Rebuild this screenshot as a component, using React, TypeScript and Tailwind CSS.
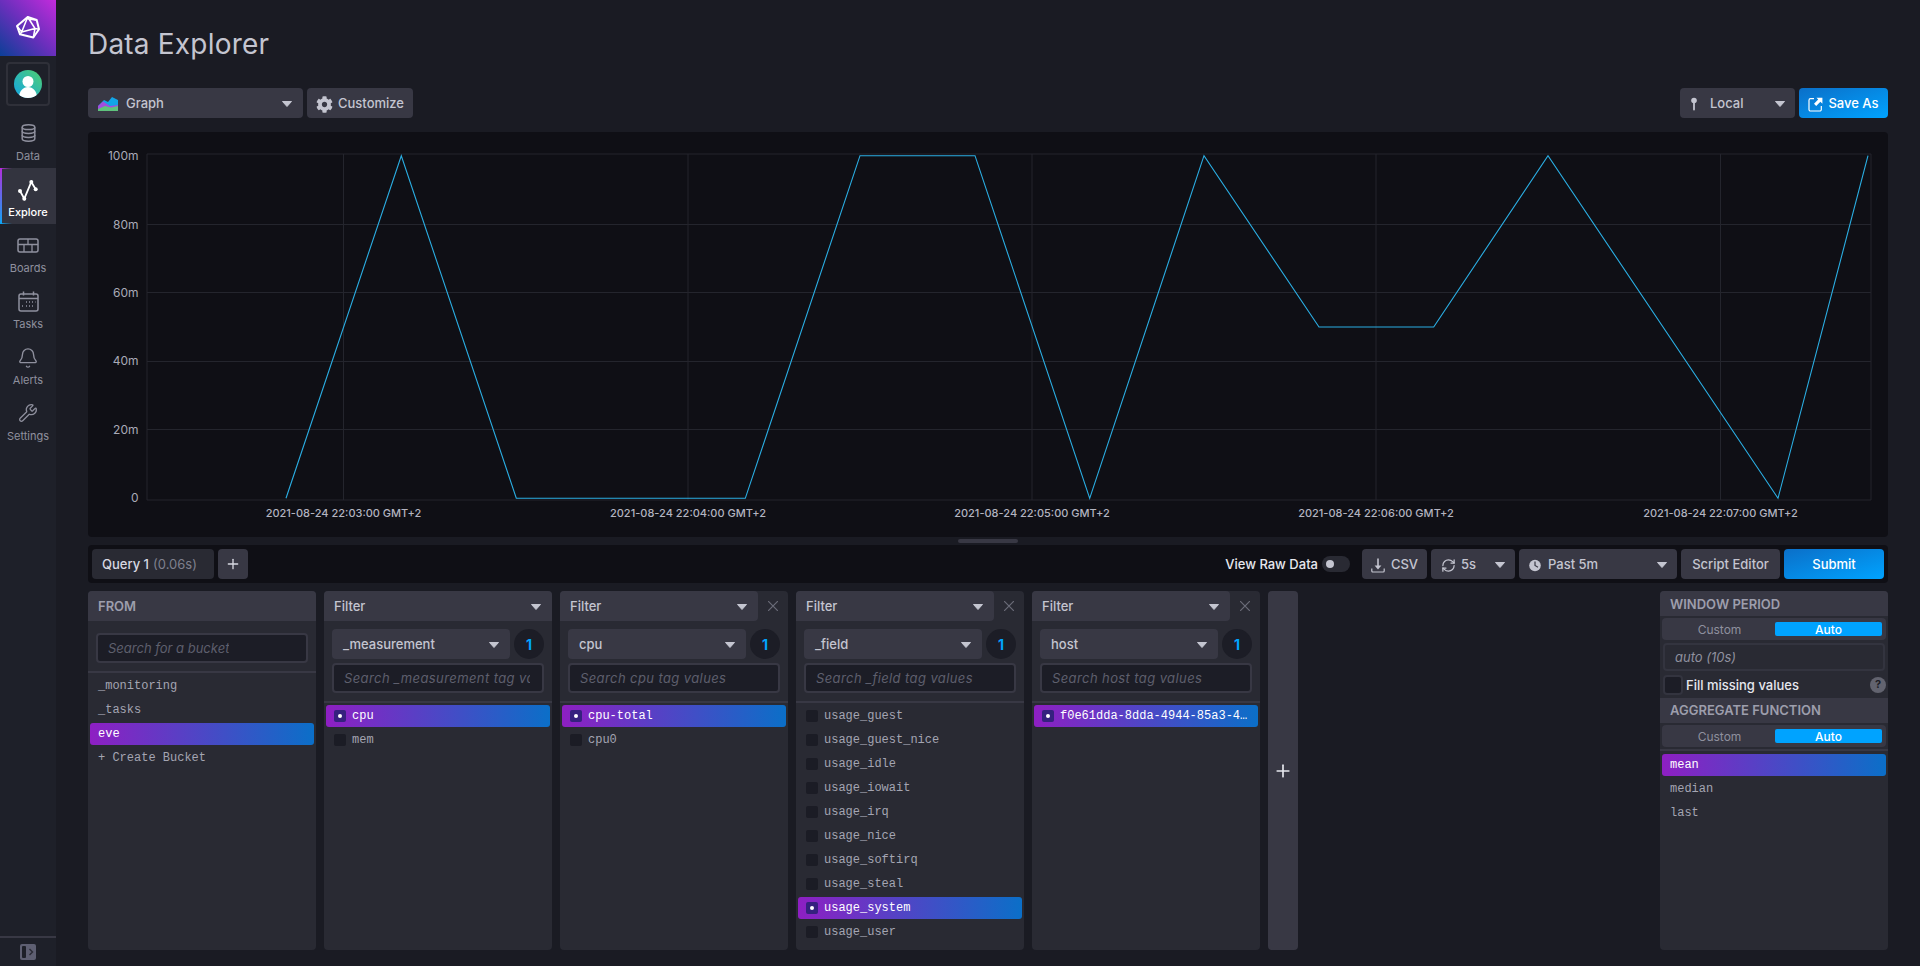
import React from "react";
import { Bell, Plus, RefreshCw, Wrench } from "lucide-react";
import { FaCog } from "react-icons/fa";

const mono = "font-[family-name:'Liberation_Mono',monospace]";

const Caret = () => (
  <svg width="10" height="6" viewBox="0 0 10 6" className="shrink-0">
    <path d="M0.5 0.5h9L5 5.5z" fill="#c4c5d0" stroke="#c4c5d0" strokeLinejoin="round" />
  </svg>
);

const LogoIcon = () => (
  <svg width="26" height="26" viewBox="15 15 26 26" fill="none" stroke="#fff" strokeLinejoin="round">
    <path d="M17 26L27.7 17L36.7 20L39 29.3L33.3 37.5L20 34.3z" strokeWidth="2" />
    <path d="M27.7 17L21.7 32L35 28.5zM17 26L21.7 32L20 34.3M36.7 20L27.7 19M39 29.3L35 28.5L33.3 37.5" strokeWidth="1.5" />
  </svg>
);

const Avatar = () => (
  <svg width="28" height="28" viewBox="0 0 28 28">
    <defs>
      <linearGradient id="avatar-g" x1="0" y1="1" x2="1" y2="0">
        <stop offset="0" stopColor="#12a5e6" />
        <stop offset="1" stopColor="#4fcf70" />
      </linearGradient>
      <clipPath id="avatar-c">
        <circle cx="14" cy="14" r="14" />
      </clipPath>
    </defs>
    <circle cx="14" cy="14" r="14" fill="url(#avatar-g)" />
    <g clipPath="url(#avatar-c)" fill="#fff">
      <circle cx="14" cy="11.5" r="5.5" />
      <path d="M5 28c0-7 4-11 9-11s9 4 9 11z" />
    </g>
  </svg>
);

const DatabaseIcon = () => (
  <svg width="15" height="18" viewBox="0 0 15 18" fill="none" stroke="#8f909e" strokeWidth="1.5">
    <ellipse cx="7.5" cy="3.2" rx="6.3" ry="2.4" />
    <path d="M1.2 3.2v11.6c0 1.3 2.8 2.4 6.3 2.4s6.3-1.1 6.3-2.4V3.2" />
    <path d="M1.2 7c0 1.3 2.8 2.4 6.3 2.4s6.3-1.1 6.3-2.4M1.2 11c0 1.3 2.8 2.4 6.3 2.4s6.3-1.1 6.3-2.4" />
  </svg>
);

const ExploreIcon = () => (
  <svg width="24" height="24" viewBox="0 -1 24 24" fill="none">
    <path d="M4 13L8.3 20.7L15.3 4L19.7 11.3" stroke="#fff" strokeWidth="1.8" />
    <circle cx="4" cy="13" r="2" fill="#fff" />
    <circle cx="8.3" cy="20.7" r="2" fill="#fff" />
    <circle cx="15.3" cy="4" r="2" fill="#fff" />
    <circle cx="19.7" cy="11.3" r="2" fill="#fff" />
  </svg>
);

const BoardsIcon = () => (
  <svg width="22" height="15" viewBox="0 0 22 15" fill="none" stroke="#8f909e" strokeWidth="1.5">
    <rect x="1" y="1" width="20" height="13" rx="2" />
    <path d="M1 6.5h20M11 1v5.5M7 6.5V14M15 6.5V14" strokeWidth="1.3" />
  </svg>
);

const CalendarIcon = () => (
  <svg width="21" height="21" viewBox="0 0 21 21" fill="none" stroke="#8f909e" strokeWidth="1.5">
    <rect x="1" y="3" width="19" height="17" rx="2" />
    <path d="M1 7.5h19M5.5 0.5v4M15.5 0.5v4" />
    <path d="M8 11h1M11 11h1M14 11h1M17 11h0.5M4 15h1M8 15h1M11 15h1M14 15h1" strokeWidth="1.3" />
  </svg>
);

const GraphIcon = () => (
  <svg width="20" height="14" viewBox="0 0 20 14">
    <path d="M0 14V9L6 3L10 5L14 0L20 3V14z" fill="#12a5e6" />
    <path d="M0 14V9L5 4.5L12 9L20 8V14z" fill="#a34be0" />
    <path d="M0 14V12L7 9L13 10.5L20 9V14z" fill="#5fc27d" />
  </svg>
);

const PinIcon = () => (
  <svg width="8" height="14" viewBox="0 0 8 14" fill="#c4c5d0">
    <circle cx="4" cy="3.5" r="2.8" />
    <rect x="3.1" y="5" width="1.8" height="8.5" rx="0.9" />
  </svg>
);

const SaveAsIcon = () => (
  <svg width="15" height="15" viewBox="0 0 15 15" fill="none">
    <path d="M6 1.7H2.5a1.5 1.5 0 0 0-1.5 1.5v9.3a1.5 1.5 0 0 0 1.5 1.5h9.3a1.5 1.5 0 0 0 1.5-1.5V9" stroke="#fff" strokeWidth="1.2" />
    <path d="M8.5 0.8H14.4V6.7L12.4 4.8L8.2 9L6 6.8L10.2 2.6z" fill="#fff" />
  </svg>
);

const DownloadIcon = () => (
  <svg width="14" height="15" viewBox="0 0 14 15" fill="none">
    <path d="M7 0.5V10" stroke="#c4c5d0" strokeWidth="1.6" />
    <path d="M3.6 7.4H10.4L7 11.6z" fill="#c4c5d0" />
    <path d="M0.8 10.5V13a1 1 0 0 0 1 1h10.4a1 1 0 0 0 1-1v-2.5" stroke="#c4c5d0" strokeWidth="1.2" />
  </svg>
);

const ClockIcon = () => (
  <svg width="12" height="14" viewBox="0 0 12 14">
    <circle cx="6" cy="7.5" r="5.8" fill="#c4c5d0" />
    <path d="M6 3.5V7.5L9 9.2" stroke="#383844" strokeWidth="1.2" fill="none" />
  </svg>
);

const CloseIcon = () => (
  <svg width="10" height="10" viewBox="0 0 10 10" stroke="#6a6b78" strokeWidth="1.2" className="shrink-0">
    <path d="M0 0L10 10M10 0L0 10" />
  </svg>
);

const SidebarToggle = () => (
  <svg width="16" height="16" viewBox="0 0 16 16">
    <rect width="16" height="16" rx="2" fill="#5e5f72" />
    <rect x="2" y="2" width="4" height="12" rx="1" fill="#1e2029" />
    <path d="M9.5 5L12.5 8L9.5 11" fill="none" stroke="#2a2b34" strokeWidth="1.4" />
  </svg>
);

const NavItem = ({ icon, label, active }: { icon: React.ReactNode; label: string; active?: boolean }) => (
  <div
    className={`relative h-14 flex flex-col items-center pt-[9px] ${active ? "bg-[#33343f] text-white" : "text-[#8f909e]"}`}
  >
    {active && (
      <>
        <div className="absolute left-0 top-0 bottom-0 w-[2px] bg-linear-to-b/srgb from-[#b52ddc] to-[#0ea5f5]" />
        <div className="absolute left-0 top-0 w-3 h-[1px] bg-linear-to-r from-[#b52ddc] to-transparent" />
        <div className="absolute left-0 bottom-0 w-3 h-[1px] bg-linear-to-r from-[#0ea5f5] to-transparent" />
      </>
    )}
    <div className="h-6 flex items-center justify-center">{icon}</div>
    <div className={`mt-[3px] text-[11px] leading-4 ${active ? "font-medium" : ""}`}>{label}</div>
  </div>
);

const Sidebar = () => (
  <div className="w-14 h-full shrink-0 bg-[#1e2029] flex flex-col">
    <div className="h-14 flex items-center justify-center bg-linear-to-tr/srgb from-[#0b3f97] via-[#6a2fbc] to-[#c32bdc]">
      <LogoIcon />
    </div>
    <div className="mx-[6px] mt-[6px] h-11 border-2 border-[#2f3039] rounded flex items-center justify-center">
      <Avatar />
    </div>
    <div className="mt-[6px]">
      <NavItem label="Data" icon={<DatabaseIcon />} />
      <NavItem label="Explore" icon={<ExploreIcon />} active />
      <NavItem label="Boards" icon={<BoardsIcon />} />
      <NavItem label="Tasks" icon={<CalendarIcon />} />
      <NavItem label="Alerts" icon={<Bell size={22} strokeWidth={1.5} color="#8f909e" className="mt-[2px]" />} />
      <NavItem label="Settings" icon={<Wrench size={20} strokeWidth={1.5} color="#8f909e" />} />
    </div>
    <div className="mt-auto h-[30px] border-t-2 border-[#383844] flex items-center justify-center">
      <SidebarToggle />
    </div>
  </div>
);

const points = [
  [286, 498.3], [401.3, 155.7], [516.3, 498.3], [745.3, 498.3], [860, 155.7], [975, 155.7], [1089.7, 498.3],
  [1204, 155.7], [1319, 327], [1433.7, 327], [1548, 155.7], [1778, 498.3], [1868, 155.7],
];
const yTicks = [
  { label: "100m", y: 154, ty: 156 },
  { label: "80m", y: 224.5, ty: 225 },
  { label: "60m", y: 292.5, ty: 293 },
  { label: "40m", y: 361.5, ty: 361 },
  { label: "20m", y: 429.5, ty: 430 },
  { label: "0", y: 500, ty: 498 },
];
const xTicks = [
  { x: 343.5, label: "2021-08-24 22:03:00 GMT+2" },
  { x: 688, label: "2021-08-24 22:04:00 GMT+2" },
  { x: 1032, label: "2021-08-24 22:05:00 GMT+2" },
  { x: 1376, label: "2021-08-24 22:06:00 GMT+2" },
  { x: 1720.5, label: "2021-08-24 22:07:00 GMT+2" },
];

const Chart = () => (
  <div className="h-[405px] bg-[#0f0f15] rounded">
    <svg width="1800" height="405" viewBox="88 132 1800 405" className="block">
      {yTicks.map((t) => (
        <g key={t.label}>
          <line x1="147" x2="1871" y1={t.y} y2={t.y} stroke="#24252d" />
          <text x="138.5" y={t.ty} dy="4" textAnchor="end" fontSize="12" fill="#a9aab7">
            {t.label}
          </text>
        </g>
      ))}
      <line x1="147" x2="147" y1="154" y2="500" stroke="#24252d" />
      <line x1="1871" x2="1871" y1="154" y2="500" stroke="#24252d" />
      {xTicks.map((t) => (
        <g key={t.x}>
          <line x1={t.x} x2={t.x} y1="154" y2="500" stroke="#24252d" />
          <text x={t.x} y="517" textAnchor="middle" fontSize="11" fontWeight="500" fill="#b3b4c0">
            {t.label}
          </text>
        </g>
      ))}
      <polyline points={points.map((p) => p.join(",")).join(" ")} fill="none" stroke="#2baee3" strokeWidth="1.1" />
    </svg>
  </div>
);

const QueryBar = () => (
  <div className="h-[38px] mt-2 bg-[#0f0f15] rounded flex items-center px-1 gap-1 text-[13px] font-medium text-[#c4c5d0]">
    <div className="h-[30px] w-[122px] pt-[2px] rounded bg-[#292a33] flex items-center pl-[10px] text-[#d8d9e2]">
      Query 1<span className="ml-1 font-normal text-[#7f808e]">(0.06s)</span>
    </div>
    <div className="h-[30px] w-[30px] rounded bg-[#383844] flex items-center justify-center">
      <Plus size={16} strokeWidth={2} color="#d8d9e2" />
    </div>
    <div className="ml-auto pt-[2px] text-[#e6e7ee]">View Raw Data</div>
    <div className="w-7 h-4 rounded-full bg-[#292a33] flex items-center pl-1 mr-2">
      <div className="w-2 h-2 rounded-full bg-[#c4c5d0]" />
    </div>
    <div className="h-[30px] w-[65px] pt-[2px] rounded bg-[#383844] flex items-center justify-center gap-[6px]">
      <DownloadIcon />
      CSV
    </div>
    <div className="h-[30px] w-[84px] pt-[2px] rounded bg-[#383844] flex items-center px-[10px]">
      <RefreshCw size={15} color="#c4c5d0" />
      <span className="ml-[5px]">5s</span>
      <span className="ml-auto">
        <Caret />
      </span>
    </div>
    <div className="h-[30px] w-[158px] pt-[2px] rounded bg-[#383844] flex items-center px-[10px]">
      <ClockIcon />
      <span className="ml-[7px]">Past 5m</span>
      <span className="ml-auto">
        <Caret />
      </span>
    </div>
    <div className="h-[30px] w-[99px] pt-[2px] rounded bg-[#383844] flex items-center justify-center">Script Editor</div>
    <div className="h-[30px] w-[100px] pt-[2px] rounded bg-linear-to-br/srgb from-[#0b6fc8] to-[#00a3ff] flex items-center justify-center text-white">
      Submit
    </div>
  </div>
);

const ListItem = ({ label, selected, box = true }: { label: string; selected?: boolean; box?: boolean }) => (
  <div
    className={`h-[22px] mb-[2px] rounded-[3px] px-2 flex items-center gap-[6px] text-xs ${mono} ${
      selected ? "bg-linear-to-r/srgb from-[#8e1fc3] to-[#0b6fc8] text-white" : "text-[#a4a5b2]"
    }`}
  >
    {box && (
      <div
        className={`w-3 h-3 shrink-0 rounded-[2px] flex items-center justify-center ${
          selected ? "bg-[#35217f]" : "bg-[#1b1c25]"
        }`}
      >
        {selected && <div className="w-1 h-1 rounded-full bg-white" />}
      </div>
    )}
    <span className="whitespace-nowrap">{label}</span>
  </div>
);

const SearchBox = ({ placeholder, wide }: { placeholder: string; wide?: boolean }) => (
  <div className="h-[30px] pt-[2px] rounded border-2 border-[#383844] bg-[#1c1d26] flex items-center pl-[10px] pr-3 text-[13px] italic text-[#5e5f6d]">
    <div className={`overflow-hidden whitespace-nowrap ${wide ? "tracking-[0.4px]" : ""}`}>{placeholder}</div>
  </div>
);

const FromCard = () => (
  <div className="w-[228px] h-full rounded bg-[#292a33] overflow-hidden">
    <div className="h-[30px] pt-[2px] bg-[#383844] flex items-center pl-[10px] text-[13px] font-semibold text-[#9d9eac]">
      FROM
    </div>
    <div className="px-2 pt-3 pb-2">
      <SearchBox placeholder="Search for a bucket" />
    </div>
    <div className="h-[2px] bg-[#383844] mb-[2px]" />
    <div className="px-[2px]">
      <ListItem label="_monitoring" box={false} />
      <ListItem label="_tasks" box={false} />
      <ListItem label="eve" box={false} selected />
      <ListItem label="+ Create Bucket" box={false} />
    </div>
  </div>
);

type FilterProps = { tag: string; removable?: boolean; placeholder: string; items: string[]; selected: string };

const FilterCard = ({ tag, removable, placeholder, items, selected }: FilterProps) => (
  <div className="w-[228px] h-full rounded bg-[#292a33] overflow-hidden">
    <div className="h-[30px] flex items-center">
      <div
        className={`h-full flex-1 pt-[2px] bg-[#383844] flex items-center justify-between pl-[10px] pr-[11px] text-[13px] font-medium text-[#c4c5d0] ${
          removable ? "rounded-r" : ""
        }`}
      >
        Filter
        <Caret />
      </div>
      {removable && (
        <div className="w-[30px] flex justify-center">
          <CloseIcon />
        </div>
      )}
    </div>
    <div className="px-2 pt-2 flex gap-1">
      <div className="h-[30px] flex-1 pt-[2px] rounded bg-[#383844] flex items-center justify-between pl-[11px] pr-[11px] text-[13px] font-medium text-[#c4c5d0]">
        {tag}
        <Caret />
      </div>
      <div className="w-[30px] h-[30px] pt-[2px] rounded-full bg-[#1c1d26] flex items-center justify-center text-sm font-bold text-[#00a3ff]">
        1
      </div>
    </div>
    <div className="px-2 pt-1 pb-2">
      <SearchBox placeholder={placeholder} wide />
    </div>
    <div className="h-[2px] bg-[#383844] mb-[2px]" />
    <div className="px-[2px]">
      {items.map((item) => (
        <ListItem key={item} label={item} selected={item === selected} />
      ))}
    </div>
  </div>
);

const ToggleBar = () => (
  <div className="mx-[2px] mt-[2px] h-[22px] rounded bg-[#383844] flex items-center pr-1 pl-[2px] text-xs">
    <div className="flex-1 pt-[2px] text-center text-[#8f909e]">Custom</div>
    <div className="w-[107px] h-[14px] pt-[1px] rounded-[2px] bg-[#00a3ff] text-white flex items-center justify-center font-medium">
      Auto
    </div>
  </div>
);

const FunctionCard = () => (
  <div className="w-[228px] h-full ml-auto rounded bg-[#292a33] overflow-hidden">
    <div className="h-[25px] pt-[2px] bg-[#383844] flex items-center pl-[10px] text-[13px] font-semibold text-[#9d9eac]">
      WINDOW PERIOD
    </div>
    <ToggleBar />
    <div className="mx-[3px] mt-[3px] h-7 pt-[2px] rounded border-2 border-[#33343f] flex items-center pl-[10px] text-[13px] italic text-[#8f909e]">
      auto (10s)
    </div>
    <div className="h-[27px] pl-[3px] pr-[2px] flex items-center gap-[3px] text-[13px] font-medium text-[#e6e7ee]">
      <div className="w-5 h-5 rounded border-2 border-[#33343f] bg-[#1c1d26]" />
      <span className="pt-[2px]">Fill missing values</span>
      <div className="ml-auto w-4 h-4 rounded-full bg-[#62636f] flex items-center justify-center text-[11px] font-bold text-[#1c1d26]">
        ?
      </div>
    </div>
    <div className="h-[25px] bg-[#383844] flex items-center pl-[10px] text-[13px] font-semibold text-[#9d9eac]">
      AGGREGATE FUNCTION
    </div>
    <ToggleBar />
    <div className="h-[2px] bg-[#383844] mt-[2px] mb-[3px]" />
    <div className="px-[2px]">
      <ListItem label="mean" box={false} selected />
      <ListItem label="median" box={false} />
      <ListItem label="last" box={false} />
    </div>
  </div>
);

const Builder = () => (
  <div className="h-[359px] mt-2 flex gap-2">
    <FromCard />
    <FilterCard tag="_measurement" placeholder="Search _measurement tag values" items={["cpu", "mem"]} selected="cpu" />
    <FilterCard
      tag="cpu"
      removable
      placeholder="Search cpu tag values"
      items={["cpu-total", "cpu0"]}
      selected="cpu-total"
    />
    <FilterCard
      tag="_field"
      removable
      placeholder="Search _field tag values"
      items={[
        "usage_guest",
        "usage_guest_nice",
        "usage_idle",
        "usage_iowait",
        "usage_irq",
        "usage_nice",
        "usage_softirq",
        "usage_steal",
        "usage_system",
        "usage_user",
      ]}
      selected="usage_system"
    />
    <FilterCard
      tag="host"
      removable
      placeholder="Search host tag values"
      items={["f0e61dda-8dda-4944-85a3-4…"]}
      selected="f0e61dda-8dda-4944-85a3-4…"
    />
    <div className="w-[30px] h-full rounded bg-[#383844] flex items-center justify-center">
      <Plus size={20} strokeWidth={2} color="#e6e7ee" />
    </div>
    <FunctionCard />
  </div>
);

const App = () => (
  <div className="w-[1920px] h-[966px] overflow-hidden flex bg-[#1a1b23] font-[family-name:Inter,sans-serif]">
    <Sidebar />
    <div className="flex-1 px-8">
      <div className="h-[88px] flex items-center pb-[1px]">
        <h1 className="text-[28px] leading-none font-normal tracking-[0.2px] text-[#c4c5d0]">Data Explorer</h1>
      </div>
      <div className="h-[30px] flex gap-1 text-[13px] font-medium text-[#c4c5d0]">
        <div className="w-[215px] pt-[2px] rounded bg-[#383844] flex items-center pl-[10px] pr-[11px]">
          <GraphIcon />
          <span className="ml-2">Graph</span>
          <span className="ml-auto">
            <Caret />
          </span>
        </div>
        <div className="w-[106px] pt-[2px] rounded bg-[#383844] flex items-center justify-center gap-[5px]">
          <FaCog size={17} color="#c4c5d0" />
          Customize
        </div>
        <div className="ml-auto w-[115px] pt-[2px] rounded bg-[#383844] flex items-center pl-[10px] pr-[10px]">
          <PinIcon />
          <span className="ml-3">Local</span>
          <span className="ml-auto">
            <Caret />
          </span>
        </div>
        <div className="w-[89px] pt-[2px] rounded bg-linear-to-br/srgb from-[#0b6fc8] to-[#00a3ff] flex items-center justify-center gap-[5px] text-white">
          <SaveAsIcon />
          Save As
        </div>
      </div>
      <div className="mt-[14px]">
        <Chart />
      </div>
      <div className="relative">
        <div className="absolute left-[870px] top-[2px] w-[60px] h-1 rounded-full bg-[#383844]" />
      </div>
      <QueryBar />
      <Builder />
    </div>
  </div>
);

export default App;
